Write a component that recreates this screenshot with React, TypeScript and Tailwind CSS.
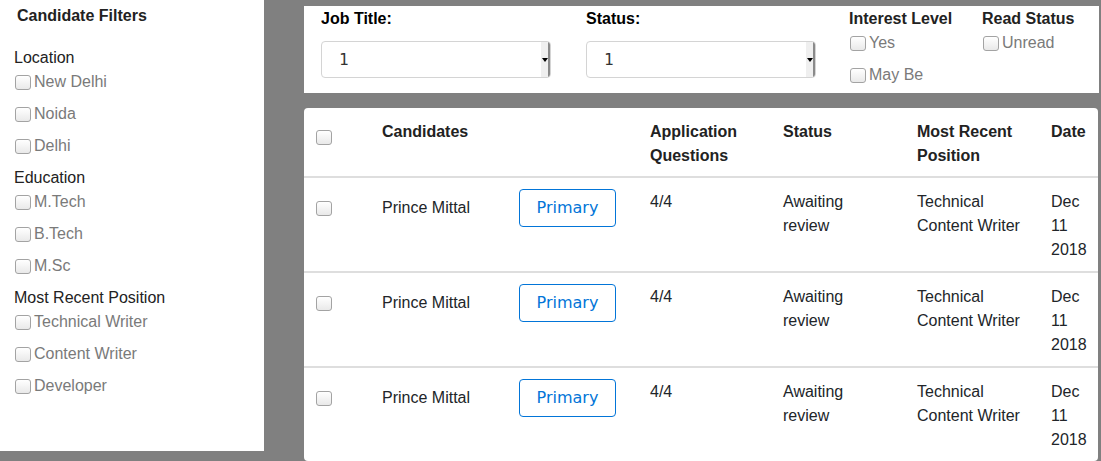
import React from 'react'

const SIDEBAR_GROUPS: { title: string; items: string[] }[] = [
  { title: 'Location', items: ['New Delhi', 'Noida', 'Delhi'] },
  { title: 'Education', items: ['M.Tech', 'B.Tech', 'M.Sc'] },
  { title: 'Most Recent Position', items: ['Technical Writer', 'Content Writer', 'Developer'] },
]

const ROWS = [1, 2, 3]

function Box() {
  return (
    <span className="block w-4 h-[15px] shrink-0 rounded-[3px] border border-[#a3a3a3] bg-gradient-to-b from-white to-[#e9e9e9]" />
  )
}

function Check({ label }: { label: string }) {
  return (
    <label className="flex items-center gap-[3px] h-6 text-[#7a7a7a]">
      <Box />
      <span>{label}</span>
    </label>
  )
}

function Select() {
  return (
    <div className="flex h-[37px] w-[230px] rounded-[4px] border border-[#d4d4d4] bg-white overflow-hidden">
      <span className="flex-1 flex items-center pl-[17px] text-[16px] text-[#333]" style={{ fontFamily: '"DejaVu Sans Mono", monospace' }}>
        1
      </span>
      <span className="w-[9px] bg-[#efefef] border-r-2 border-[#8a8a8a] flex items-center justify-center">
        <span className="block w-0 h-0 border-l-[3px] border-r-[3px] border-t-[4px] border-l-transparent border-r-transparent border-t-black" />
      </span>
    </div>
  )
}

export default function App() {
  return (
    <div
      className="flex w-full h-[461px] overflow-hidden bg-[#808080] text-[16px] leading-6 text-[#212529]"
      style={{ fontFamily: '"Liberation Sans", Arial, sans-serif' }}
    >
      {/* Sidebar */}
      <aside className="w-[264px] h-[451px] bg-white shrink-0 pl-[14px]">
        <h2 className="pt-[4px] pl-[3px] font-bold text-[#222]">Candidate Filters</h2>
        <div className="mt-[18px]">
          {SIDEBAR_GROUPS.map(group => (
            <div key={group.title}>
              <p className="text-[#222]">{group.title}</p>
              {group.items.map(item => (
                <div key={item} className="pl-px mb-2">
                  <Check label={item} />
                </div>
              ))}
            </div>
          ))}
        </div>
      </aside>

      {/* Main */}
      <main className="ml-10 pt-[6px] w-[795px] flex flex-col gap-[15px]">
        {/* Filters bar */}
        <div className="h-[88px] bg-white pl-[17px] pt-px flex">
          <div className="w-[230px]">
            <p className="font-bold text-black">Job Title:</p>
            <div className="mt-[10px]"><Select /></div>
          </div>
          <div className="w-[230px] ml-[35px]">
            <p className="font-bold text-black">Status:</p>
            <div className="mt-[10px]"><Select /></div>
          </div>
          <div className="w-[133px] ml-[33px]">
            <p className="font-bold text-[#222]">Interest Level</p>
            <div className="pl-px flex flex-col gap-2">
              <Check label="Yes" />
              <Check label="May Be" />
            </div>
          </div>
          <div>
            <p className="font-bold text-[#222]">Read Status</p>
            <div className="pl-px">
              <Check label="Unread" />
            </div>
          </div>
        </div>

        {/* Table */}
        <div className="w-[794px] flex-1 bg-white rounded-[4px]">
          <div className="grid grid-cols-[78px_137px_131px_133px_134px_134px_47px] pt-[12px] pb-[8px] font-bold text-[#222]">
            <div className="pl-3 mt-[10px]"><Box /></div>
            <div className="col-span-2">Candidates</div>
            <div className="pr-3">Application Questions</div>
            <div>Status</div>
            <div className="pr-4">Most Recent Position</div>
            <div>Date</div>
          </div>
          {ROWS.map(r => (
            <div
              key={r}
              className="grid grid-cols-[78px_137px_131px_133px_134px_134px_47px] border-t-2 border-[#dedede] pt-[11px] pb-[9px]"
            >
              <div className="pl-3 h-[38px] flex items-center"><Box /></div>
              <div className="h-[38px] flex items-center">Prince Mittal</div>
              <div>
                <button
                  className="w-[97px] h-[38px] rounded-[4px] border border-[#0275d8] text-[#0275d8] text-[16px]"
                  style={{ fontFamily: '"DejaVu Sans", sans-serif' }}
                >
                  Primary
                </button>
              </div>
              <div className="pt-px">4/4</div>
              <div className="pt-px pr-8">Awaiting review</div>
              <div className="pt-px pr-4">Technical Content Writer</div>
              <div className="pt-px">Dec 11 2018</div>
            </div>
          ))}
        </div>
      </main>
    </div>
  )
}
